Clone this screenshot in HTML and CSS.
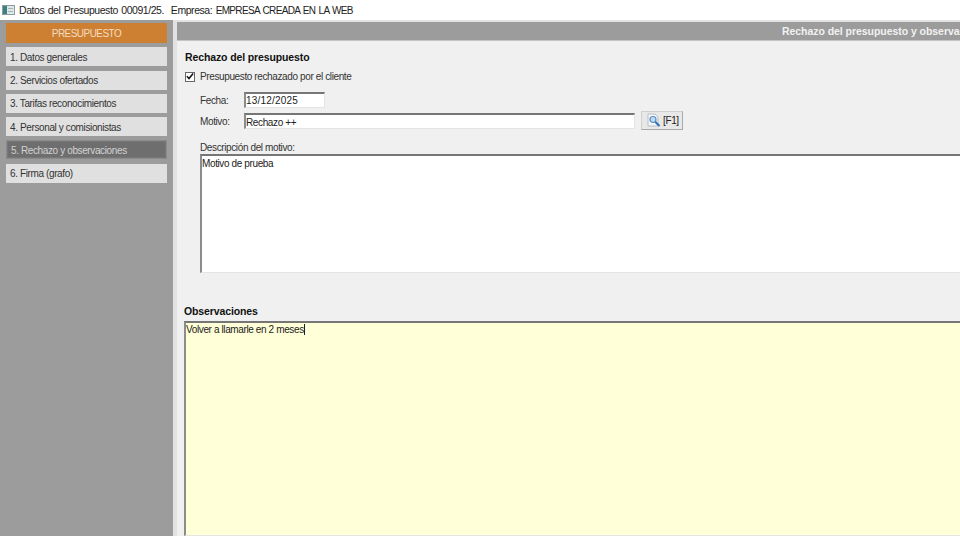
FILE: index.html
```html
<!DOCTYPE html>
<html lang="es">
<head>
<meta charset="utf-8">
<title>Datos del Presupuesto</title>
<link rel="stylesheet" href="styles.css">
</head>
<body>
<div class="window">
  <header class="titlebar">
    <svg class="appicon" width="13" height="12" viewBox="0 0 13 12"><rect x="0.5" y="1.5" width="12" height="9" fill="#dfe6e6" stroke="#8aa0a0"/><rect x="1" y="2" width="4" height="8" fill="#3f7f7f"/><rect x="6" y="4" width="5" height="1" fill="#a5b5b5"/><rect x="6" y="7" width="5" height="1" fill="#a5b5b5"/></svg>
    <span class="title">Datos del Presupuesto 00091/25.&nbsp; Empresa: <span class="company">EMPRESA CREADA EN LA WEB</span></span>
  </header>
  <div class="client">
    <nav class="sidebar">
      <div class="navhead">PRESUPUESTO</div>
      <div class="navitem">1. Datos generales</div>
      <div class="navitem">2. Servicios ofertados</div>
      <div class="navitem">3. Tarifas reconocimientos</div>
      <div class="navitem">4. Personal y comisionistas</div>
      <div class="navitem active">5. Rechazo y observaciones</div>
      <div class="navitem">6. Firma (grafo)</div>
    </nav>
    <main class="panel">
      <div class="panelhead"><span>Rechazo del presupuesto y observaciones</span></div>
      <section class="reject">
        <h2 class="heading">Rechazo del presupuesto</h2>
        <label class="check">
          <span class="box"><svg width="9" height="9" viewBox="0 0 9 9"><path d="M1 4.2 L3.4 6.8 L8 1.2" fill="none" stroke="#111" stroke-width="1.7"/></svg></span>
          Presupuesto rechazado por el cliente
        </label>
        <div class="row daterow">
          <span class="lab">Fecha:</span>
          <div class="field datefield">13/12/2025</div>
        </div>
        <div class="row reasonrow">
          <span class="lab motivolab">Motivo:</span>
          <div class="field reasonfield">Rechazo ++</div>
          <div class="btn">
            <svg width="16" height="15" viewBox="0 0 16 15"><path d="M2 1 H9 L12 4 V13 H2 Z" fill="#f4f6f8" stroke="#b9bfc6"/><circle cx="7" cy="6.5" r="3" fill="#bcdcf5" stroke="#5b8fc0" stroke-width="1.2"/><path d="M9.4 9 L13.5 13" stroke="#2f6fb5" stroke-width="2"/></svg>
            <span>[F1]</span>
          </div>
        </div>
        <div class="desclab">Descripción del motivo:</div>
        <div class="field descfield">Motivo de prueba</div>
      </section>
      <section class="notes">
        <h2 class="heading">Observaciones</h2>
        <div class="field notefield"><span class="caret">Volver a llamarle en 2 meses</span></div>
      </section>
    </main>
  </div>
</div>
</body>
</html>
```
FILE: styles.css
```css
* { box-sizing: border-box; }
html, body { margin: 0; height: 100%; overflow: hidden; }
body { font-family: "Liberation Sans", Arial, sans-serif; font-size: 10px; letter-spacing: -0.38px; color: #222; }
.window { width: 960px; height: 536px; display: flex; flex-direction: column; overflow: hidden; background: #fff; }
.titlebar { height: 20px; flex: none; display: flex; align-items: center; padding-left: 2px; gap: 4px; background: #fff; }
.appicon { flex: none; }
.title { font-size: 10.5px; letter-spacing: -0.45px; word-spacing: 1px; color: #222; white-space: nowrap; }
.company { font-size: 10px; letter-spacing: -0.66px; }
.client { flex: 1; display: flex; min-height: 0; background: #e2e2e2; }
.sidebar { width: 173px; flex: none; background: #9c9c9c; padding: 3px 6px 0; display: flex; flex-direction: column; gap: 4.25px; }
.navhead { height: 20px; background: #cd7f32; color: #f3dcc0; display: flex; align-items: center; justify-content: center; font-size: 10px; letter-spacing: -0.55px; width: 161px; }
.navitem { height: 19px; width: 161px; background: #e0e0e0; display: flex; align-items: center; padding: 1px 0 0 4px; color: #333; }
.navitem.active { background: #6e6e6e; border: 1px solid #8a8a8a; box-shadow: inset 0 0 0 1px #777; color: #d2d2d2; padding: 1px 0 0 4px; }
.panel { flex: 1; min-width: 0; margin: 2px 0 0 4px; background: #f0f0f0; display: flex; flex-direction: column; overflow: hidden; }
.panelhead { height: 19px; flex: none; background: #9c9c9c; border-bottom: 1px solid #c4c4c4; color: #f1f1f1; font-weight: bold; font-size: 10.5px; letter-spacing: -0.05px; display: flex; align-items: center; padding-left: 605px; white-space: nowrap; overflow: hidden; }
.reject { height: 252px; flex: none; padding: 10px 0 0 8px; }
.heading { margin: 0; font-size: 10.5px; font-weight: bold; color: #111; letter-spacing: -0.12px; line-height: 13px; }
.check { display: flex; align-items: center; gap: 5px; height: 13px; margin-top: 6px; color: #333; }
.box { width: 10px; height: 10px; border: 1px solid #666; background: #fff; display: flex; align-items: center; justify-content: center; flex: none; }
.row { display: flex; align-items: center; padding-left: 15px; }
.lab { width: 44px; flex: none; color: #333; }
.motivolab { padding-top: 2px; }
.daterow { margin-top: 9px; }
.reasonrow { margin-top: 3px; }
.field { background: #fff; border: 1px solid #e4e4e4; border-top: 2px solid #767676; border-left: 2px solid #8c8c8c; color: #222; white-space: nowrap; }
.datefield { width: 81px; height: 16px; line-height: 13px; letter-spacing: 0.2px; }
.reasonfield { width: 391px; height: 16px; line-height: 15px; margin-top: 1px; }
.btn { margin-left: 6px; width: 42px; height: 19px; background: #e8e8e8; border: 1px solid #cfcfcf; border-right-color: #a8a8a8; border-bottom-color: #a8a8a8; display: flex; align-items: center; padding-left: 4px; gap: 1px; color: #222; }
.desclab { margin: 11px 0 0 15px; line-height: 13px; color: #333; }
.descfield { width: 780px; height: 119px; margin: 0 0 0 15px; padding-top: 2px; }
.notes { flex: 1; padding: 0 0 0 7px; display: flex; flex-direction: column; min-height: 0; }
.notes .heading { margin: 12px 0 3px; }
.notefield { flex: 1; width: 790px; background: #ffffd8; padding-top: 1px; }
.caret { border-right: 1px solid #123; }
```
